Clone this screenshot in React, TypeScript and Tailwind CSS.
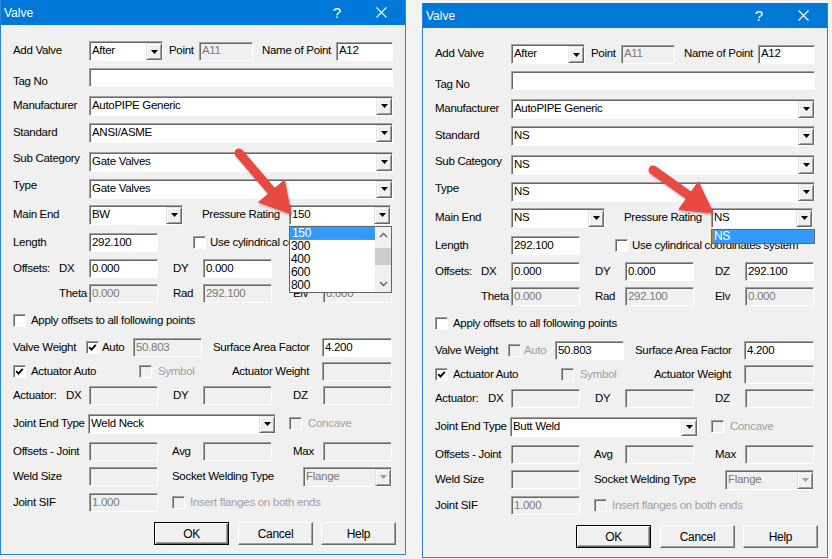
import React from "react";

type FieldProps = { w: string; value?: string; disabled?: boolean };

function Field({ w, value = "", disabled = false }: FieldProps) {
  return (
    <div
      className={`${w} h-[19px] shrink-0 flex items-center pl-[2px] overflow-hidden whitespace-nowrap border border-t-[#a0a0a0] border-l-[#a0a0a0] border-r-white border-b-white shadow-[inset_1px_1px_0_#696969] ${
        disabled ? "bg-[#f0f0f0] text-[#7a7a7a]" : "bg-white text-black"
      }`}
    >
      {value}
    </div>
  );
}

function Select({ w, value = "", disabled = false }: FieldProps) {
  return (
    <div
      className={`${w} h-[20px] shrink-0 flex border border-t-[#a0a0a0] border-l-[#a0a0a0] border-r-white border-b-white shadow-[inset_1px_1px_0_#696969] ${
        disabled ? "bg-[#f0f0f0] text-[#7a7a7a]" : "bg-white text-black"
      }`}
    >
      <div className="flex-1 flex items-center pl-[2px] overflow-hidden whitespace-nowrap">{value}</div>
      <div className="w-[16px] mt-[1px] flex items-center justify-center bg-[#f0f0f0] border border-t-[#e3e3e3] border-l-[#e3e3e3] border-r-[#696969] border-b-[#696969] shadow-[inset_1px_1px_0_#ffffff,inset_-1px_-1px_0_#a0a0a0]">
        <svg width="7" height="4" viewBox="0 0 7 4">
          <path d="M0 0H7L3.5 4Z" fill={disabled ? "#a0a0a0" : "#000000"} />
        </svg>
      </div>
    </div>
  );
}

function Check({ checked = false, disabled = false }: { checked?: boolean; disabled?: boolean }) {
  return (
    <div
      className={`w-[13px] h-[13px] shrink-0 flex items-center justify-center border border-t-[#a0a0a0] border-l-[#a0a0a0] border-r-white border-b-white shadow-[inset_1px_1px_0_#696969] ${
        disabled ? "bg-[#f0f0f0]" : "bg-white"
      }`}
    >
      {checked && (
        <svg width="9" height="9" viewBox="0 0 9 9">
          <path d="M1.2 4.2 L3.5 6.6 L7.8 1.8" stroke="#000000" strokeWidth="1.8" fill="none" />
        </svg>
      )}
    </div>
  );
}

function Btn({ label, def = false }: { label: string; def?: boolean }) {
  return (
    <div
      className={`w-[75px] h-[23px] shrink-0 flex items-center justify-center bg-[#f0f0f0] text-[12px] ${
        def
          ? "border border-black shadow-[inset_1px_1px_0_#ffffff,inset_-1px_-1px_0_#696969,inset_-2px_-2px_0_#a0a0a0]"
          : "border border-t-white border-l-white border-r-[#696969] border-b-[#696969] shadow-[inset_-1px_-1px_0_#a0a0a0]"
      }`}
    >
      {label}
    </div>
  );
}

type DialogData = {
  standard: string;
  sub: string;
  type: string;
  mainEnd: string;
  pressure: string;
  dz: string;
  autoChecked: boolean;
  autoDisabled: boolean;
  weightDisabled: boolean;
  joint: string;
  list: "left" | "right";
};

function TitleBar() {
  return (
    <div className="h-[25px] shrink-0 bg-[#0078d7] flex items-center text-white text-[12px] tracking-normal">
      <div className="pl-[3px] flex-1">Valve</div>
      <div className="w-[16px] text-center text-[15px] leading-none mr-[30px]">?</div>
      <div className="w-[12px] h-[12px] mr-[18px] flex items-center justify-center">
        <svg width="11" height="11" viewBox="0 0 11 11">
          <path d="M0.5 0.5 L10.5 10.5 M10.5 0.5 L0.5 10.5" stroke="#ffffff" strokeWidth="1.1" />
        </svg>
      </div>
    </div>
  );
}

function LeftList() {
  const items = ["150", "300", "400", "600", "800"];
  return (
    <div className="absolute left-[288px] top-[226px] w-[103px] h-[67px] bg-white border border-[#646464] flex text-[12px]">
      <div className="flex-1 flex flex-col">
        {items.map((it, i) => (
          <div
            key={it}
            className={`h-[13px] pl-[1px] ${
              i === 0 ? "bg-[#3399ff] text-white border border-dotted border-[#c8843a] leading-[11px]" : "text-black leading-[13px]"
            }`}
          >
            {it}
          </div>
        ))}
      </div>
      <div className="w-[16px] flex flex-col bg-[#f0f0f0]">
        <div className="h-[16px] flex items-center justify-center">
          <svg width="9" height="6" viewBox="0 0 9 6">
            <path d="M1 5 L4.5 1.5 L8 5" stroke="#606060" strokeWidth="1.4" fill="none" />
          </svg>
        </div>
        <div className="flex-1 pt-[5px]">
          <div className="h-[17px] bg-[#cdcdcd]" />
        </div>
        <div className="h-[16px] flex items-center justify-center">
          <svg width="9" height="6" viewBox="0 0 9 6">
            <path d="M1 1 L4.5 4.5 L8 1" stroke="#606060" strokeWidth="1.4" fill="none" />
          </svg>
        </div>
      </div>
    </div>
  );
}

function RightList() {
  return (
    <div className="absolute left-[288px] top-[226px] w-[104px] h-[15px] bg-white border border-[#646464] text-[12px]">
      <div className="h-[13px] leading-[11px] pl-[1px] bg-[#3399ff] text-white border border-dotted border-[#c8843a]">NS</div>
    </div>
  );
}

function Dialog({ d, extra }: { d: DialogData; extra: string }) {
  return (
    <div className={`relative w-[406px] shrink-0 flex flex-col bg-[#f0f0f0] border-x border-b border-[#2a86d6] ${extra}`}>
      <TitleBar />
      <div className="flex flex-col pl-[12px] pt-[16px] pb-[9px] text-[11.5px] leading-none text-black">
        {/* Add Valve */}
        <div className="h-[20px] flex items-center">
          <div className="w-[76px] shrink-0">Add Valve</div>
          <Select w="w-[74px]" value="After" />
          <div className="ml-[6px] w-[30px] shrink-0">Point</div>
          <Field w="w-[54px]" value="A11" disabled />
          <div className="ml-[9px] w-[74px] shrink-0 whitespace-nowrap">Name of Point</div>
          <Field w="w-[57px]" value="A12" />
        </div>
        {/* Tag No */}
        <div className="mt-[7px] h-[19px] flex items-center">
          <div className="w-[76px] shrink-0 pt-[8px]">Tag No</div>
          <Field w="w-[304px]" />
        </div>
        <div className="mt-[9px] h-[19px] flex items-center">
          <div className="w-[76px] shrink-0">Manufacturer</div>
          <Select w="w-[304px]" value="AutoPIPE Generic" />
        </div>
        <div className="mt-[8px] h-[19px] flex items-center">
          <div className="w-[76px] shrink-0">Standard</div>
          <Select w="w-[304px]" value={d.standard} />
        </div>
        <div className="mt-[10px] h-[19px] flex items-center">
          <div className="w-[76px] shrink-0 whitespace-nowrap pb-[6px]">Sub Category</div>
          <Select w="w-[304px]" value={d.sub} />
        </div>
        <div className="mt-[8px] h-[19px] flex items-center">
          <div className="w-[76px] shrink-0 pb-[5px]">Type</div>
          <Select w="w-[304px]" value={d.type} />
        </div>
        {/* Main End */}
        <div className="mt-[7px] h-[19px] flex items-center">
          <div className="w-[76px] shrink-0">Main End</div>
          <Select w="w-[94px]" value={d.mainEnd} />
          <div className="ml-[19px] w-[87px] shrink-0 whitespace-nowrap">Pressure Rating</div>
          <Select w="w-[102px]" value={d.pressure} />
        </div>
        {/* Length */}
        <div className="mt-[9px] h-[19px] flex items-center">
          <div className="w-[76px] shrink-0">Length</div>
          <Field w="w-[69px]" value="292.100" />
          <div className="ml-[35px]">
            <Check />
          </div>
          <div className="ml-[4px] whitespace-nowrap">Use cylindrical coordinates system</div>
        </div>
        {/* Offsets */}
        <div className="mt-[7px] h-[19px] flex items-center">
          <div className="w-[46px] shrink-0">Offsets:</div>
          <div className="w-[30px] shrink-0">DX</div>
          <Field w="w-[69px]" value="0.000" />
          <div className="ml-[15px] w-[30px] shrink-0">DY</div>
          <Field w="w-[69px]" value="0.000" />
          <div className="ml-[21px] w-[30px] shrink-0">DZ</div>
          <Field w="w-[69px]" value={d.dz} />
        </div>
        {/* Theta */}
        <div className="mt-[6px] h-[19px] flex items-center">
          <div className="w-[46px] shrink-0" />
          <div className="w-[30px] shrink-0">Theta</div>
          <Field w="w-[69px]" value="0.000" disabled />
          <div className="ml-[15px] w-[30px] shrink-0">Rad</div>
          <Field w="w-[69px]" value="292.100" disabled />
          <div className="ml-[21px] w-[30px] shrink-0">Elv</div>
          <Field w="w-[69px]" value="0.000" disabled />
        </div>
        {/* Apply */}
        <div className="mt-[8px] h-[19px] flex items-center">
          <Check />
          <div className="ml-[5px] whitespace-nowrap">Apply offsets to all following points</div>
        </div>
        {/* Valve Weight */}
        <div className="mt-[8px] h-[19px] flex items-center">
          <div className="w-[73px] shrink-0 whitespace-nowrap">Valve Weight</div>
          <Check checked={d.autoChecked} disabled={d.autoDisabled} />
          <div className={`ml-[3px] w-[31px] shrink-0 ${d.autoDisabled ? "text-[#a0a0a0]" : ""}`}>Auto</div>
          <Field w="w-[69px]" value="50.803" disabled={d.weightDisabled} />
          <div className="ml-[11px] w-[109px] shrink-0 whitespace-nowrap">Surface Area Factor</div>
          <Field w="w-[70px]" value="4.200" />
        </div>
        {/* Actuator Auto */}
        <div className="mt-[5px] h-[19px] flex items-center">
          <Check checked />
          <div className="ml-[5px] w-[108px] shrink-0 whitespace-nowrap">Actuator Auto</div>
          <Check disabled />
          <div className="ml-[6px] w-[74px] shrink-0 text-[#a0a0a0]">Symbol</div>
          <div className="w-[90px] shrink-0 whitespace-nowrap">Actuator Weight</div>
          <Field w="w-[70px]" disabled />
        </div>
        {/* Actuator DX */}
        <div className="mt-[5px] h-[19px] flex items-center">
          <div className="w-[53px] shrink-0">Actuator:</div>
          <div className="w-[23px] shrink-0">DX</div>
          <Field w="w-[69px]" disabled />
          <div className="ml-[15px] w-[30px] shrink-0">DY</div>
          <Field w="w-[69px]" disabled />
          <div className="ml-[21px] w-[30px] shrink-0">DZ</div>
          <Field w="w-[69px]" disabled />
        </div>
        {/* Joint End Type */}
        <div className="mt-[9px] h-[19px] flex items-center">
          <div className="w-[75px] shrink-0 whitespace-nowrap">Joint End Type</div>
          <Select w="w-[188px]" value={d.joint} />
          <div className="ml-[13px]">
            <Check disabled />
          </div>
          <div className="ml-[6px] text-[#a0a0a0]">Concave</div>
        </div>
        {/* Offsets - Joint */}
        <div className="mt-[9px] h-[19px] flex items-center">
          <div className="w-[76px] shrink-0 whitespace-nowrap">Offsets - Joint</div>
          <Field w="w-[69px]" disabled />
          <div className="ml-[14px] w-[31px] shrink-0">Avg</div>
          <Field w="w-[69px]" disabled />
          <div className="ml-[21px] w-[30px] shrink-0">Max</div>
          <Field w="w-[69px]" disabled />
        </div>
        {/* Weld Size */}
        <div className="mt-[6px] h-[19px] flex items-center">
          <div className="w-[76px] shrink-0">Weld Size</div>
          <Field w="w-[69px]" disabled />
          <div className="ml-[14px] w-[131px] shrink-0 whitespace-nowrap">Socket Welding Type</div>
          <Select w="w-[89px]" value="Flange" disabled />
        </div>
        {/* Joint SIF */}
        <div className="mt-[7px] h-[19px] flex items-center">
          <div className="w-[76px] shrink-0">Joint SIF</div>
          <Field w="w-[69px]" value="1.000" disabled />
          <div className="ml-[14px]">
            <Check disabled />
          </div>
          <div className="ml-[5px] whitespace-nowrap text-[#a0a0a0]">Insert flanges on both ends</div>
        </div>
        {/* Buttons */}
        <div className="mt-[10px] h-[23px] flex items-center">
          <div className="ml-[141px]">
            <Btn label="OK" def />
          </div>
          <div className="ml-[9px]">
            <Btn label="Cancel" />
          </div>
          <div className="ml-[8px]">
            <Btn label="Help" />
          </div>
        </div>
      </div>
      {d.list === "left" ? <LeftList /> : <RightList />}
    </div>
  );
}

const leftData: DialogData = {
  standard: "ANSI/ASME",
  sub: "Gate Valves",
  type: "Gate Valves",
  mainEnd: "BW",
  pressure: "150",
  dz: "292.100",
  autoChecked: true,
  autoDisabled: false,
  weightDisabled: true,
  joint: "Weld Neck",
  list: "left",
};

const rightData: DialogData = {
  standard: "NS",
  sub: "NS",
  type: "NS",
  mainEnd: "NS",
  pressure: "NS",
  dz: "292.100",
  autoChecked: false,
  autoDisabled: true,
  weightDisabled: false,
  joint: "Butt Weld",
  list: "right",
};

export default function App() {
  return (
    <div className="relative w-[832px] h-[559px] overflow-hidden bg-[#f3f3f3] flex items-start font-['Liberation_Sans',sans-serif] tracking-[-0.3px]">
      <Dialog d={leftData} extra="" />
      <Dialog d={rightData} extra="ml-[16px] mt-[3px]" />
      <svg className="absolute inset-0 pointer-events-none" width="832" height="559" viewBox="0 0 832 559">
        <defs>
          <filter id="sh" x="-20%" y="-20%" width="140%" height="140%">
            <feDropShadow dx="1" dy="1.5" stdDeviation="1.2" floodColor="#000000" floodOpacity="0.3" />
          </filter>
        </defs>
        <g filter="url(#sh)" fill="#e84a3f" stroke="#e84a3f">
          <line x1="239" y1="153" x2="274" y2="194" strokeWidth="9" strokeLinecap="round" />
          <polygon points="291,214 284.4,180.2 258.6,202.2" strokeWidth="1" strokeLinejoin="round" />
          <line x1="653" y1="170" x2="691" y2="197" strokeWidth="9" strokeLinecap="round" />
          <polygon points="713,213 698.3,181.8 678.7,209.6" strokeWidth="1" strokeLinejoin="round" />
        </g>
      </svg>
    </div>
  );
}
